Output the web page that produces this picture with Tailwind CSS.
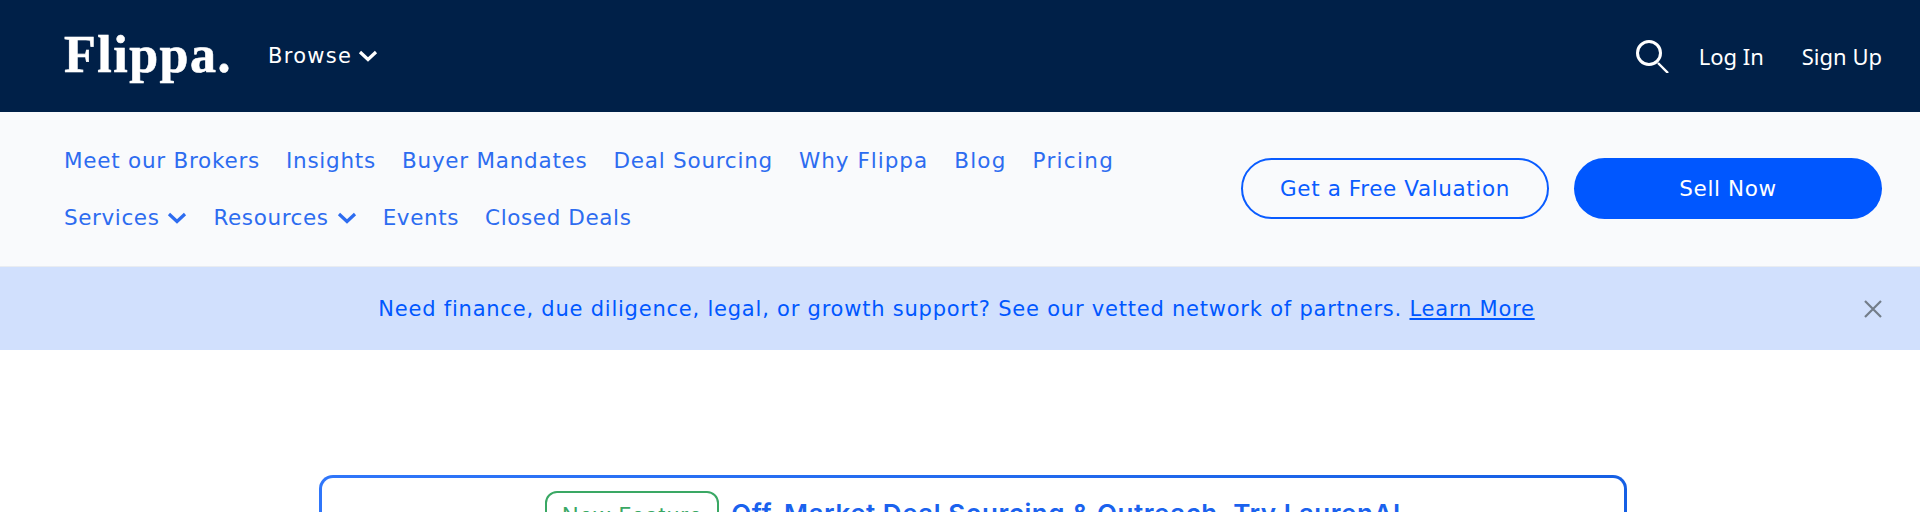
<!DOCTYPE html>
<html lang="en">
<head>
    <meta charset="UTF-8">
    <title>Flippa</title>
    <script src="https://cdn.jsdelivr.net/npm/@tailwindcss/browser@4"></script>
</head>
<body class="bg-white h-[512px] overflow-hidden font-['DejaVu_Sans',sans-serif]">
    <header class="h-[112px] bg-[#002048] pl-16 pr-[38px] flex items-center justify-between text-white">
        <div class="flex items-center">
            <a href="#" class="font-['Liberation_Serif',serif] font-bold text-[52px] leading-none tracking-[1.5px] [-webkit-text-stroke:0.6px_white] w-[204px] mt-[-2px]">Flippa.</a>
            <a href="#" class="flex items-center gap-[6px] text-[21px] tracking-[1.3px]">
                <span class="mt-[2px]">Browse</span>
                <svg class="w-[20px] h-[12px]" viewBox="0 0 19 12" fill="none" stroke="currentColor" stroke-width="3.2"><path d="M1.5 2l8 7.5 8-7.5"/></svg>
            </a>
        </div>
        <div class="flex items-center font-['Noto_Sans',sans-serif] text-[22px]">
            <svg class="w-[36px] h-[34px] mr-[28px]" viewBox="0 0 36 34" fill="none" stroke="currentColor"><circle cx="14" cy="14" r="11.5" stroke-width="3"/><path d="M23 24l10 10" stroke-width="2.400"/></svg>
            <a href="#">Log In</a>
            <a href="#" class="ml-[38px]">Sign Up</a>
        </div>
    </header>

    <div class="h-[155px] bg-[#f9fafc] border-b border-[#e9ecf1] pl-16 pr-[38px] pb-px flex items-center justify-between text-[21.5px] text-[#2d6cf0]">
        <nav class="flex flex-col gap-[31px] leading-[26px] mt-[2px]">
            <div class="flex gap-[26px] tracking-[0.75px]">
                <a href="#">Meet our Brokers</a>
                <a href="#">Insights</a>
                <a href="#">Buyer Mandates</a>
                <a href="#">Deal Sourcing</a>
                <a href="#" class="tracking-[1px]">Why Flippa</a>
                <a href="#" class="tracking-[1.2px]">Blog</a>
                <a href="#" class="tracking-[1.3px]">Pricing</a>
            </div>
            <div class="flex gap-[26px] tracking-[0.6px]">
                <a href="#" class="flex items-center gap-[8px]">Services
                    <svg class="w-[20px] h-[12px]" viewBox="0 0 19 12" fill="none" stroke="currentColor" stroke-width="3.2"><path d="M1.5 2l8 7.500 8-7.500"/></svg>
                </a>
                <a href="#" class="flex items-center gap-[8px]">Resources
                    <svg class="w-[20px] h-[12px]" viewBox="0 0 19 12" fill="none" stroke="currentColor" stroke-width="3.2"><path d="M1.5 2l8 7.500 8-7.500"/></svg>
                </a>
                <a href="#">Events</a>
                <a href="#">Closed Deals</a>
            </div>
        </nav>
        <div class="flex gap-[25px] tracking-[0.6px]">
            <a href="#" class="w-[308px] h-[61px] pt-[2px] rounded-full border-2 border-[#0a5cff] text-[#0a5cff] flex items-center justify-center">Get a Free Valuation</a>
            <a href="#" class="w-[308px] h-[61px] pt-[2px] rounded-full bg-[#0057ff] text-white flex items-center justify-center">Sell Now</a>
        </div>
    </div>

    <div class="h-[83px] bg-[#d1e0fd] relative flex items-center justify-center pr-[7px] text-[21px] tracking-[0.78px] text-[#0057ff]">
        <p class="mt-[2px]">Need finance, due diligence, legal, or growth support? See our vetted network of partners. <a href="#" class="underline">Learn More</a></p>
        <button class="absolute right-[37px] top-[32px] w-[20px] h-[20px] text-[#737d8a]">
            <svg class="w-[20px] h-[20px]" viewBox="0 0 20 20" fill="none" stroke="currentColor" stroke-width="2.2"><path d="M2 2l16 16M18 2L2 18"/></svg>
        </button>
    </div>

    <section class="mt-[125px] ml-[319px] w-[1308px] h-[200px] p-[3px] rounded-[14px] bg-linear-to-r from-[#2f76fa] to-[#155fe4] font-['Inter',sans-serif]">
        <div class="h-full bg-white rounded-[11px] flex justify-center pt-[13px]">
            <div class="flex items-start gap-3">
                <span class="h-[50px] w-[174px] border-2 border-[#3aa864] rounded-[12px] text-[#3aa864] text-[22px] tracking-[0.8px] text-center leading-[44px]">New Feature</span>
                <a href="#" class="text-[26px] font-semibold text-[#1a62ee] tracking-[0.54px] leading-[46px]">Off-Market Deal Sourcing &amp; Outreach. Try LaurenAI</a>
            </div>
        </div>
    </section>
</body>
</html>
